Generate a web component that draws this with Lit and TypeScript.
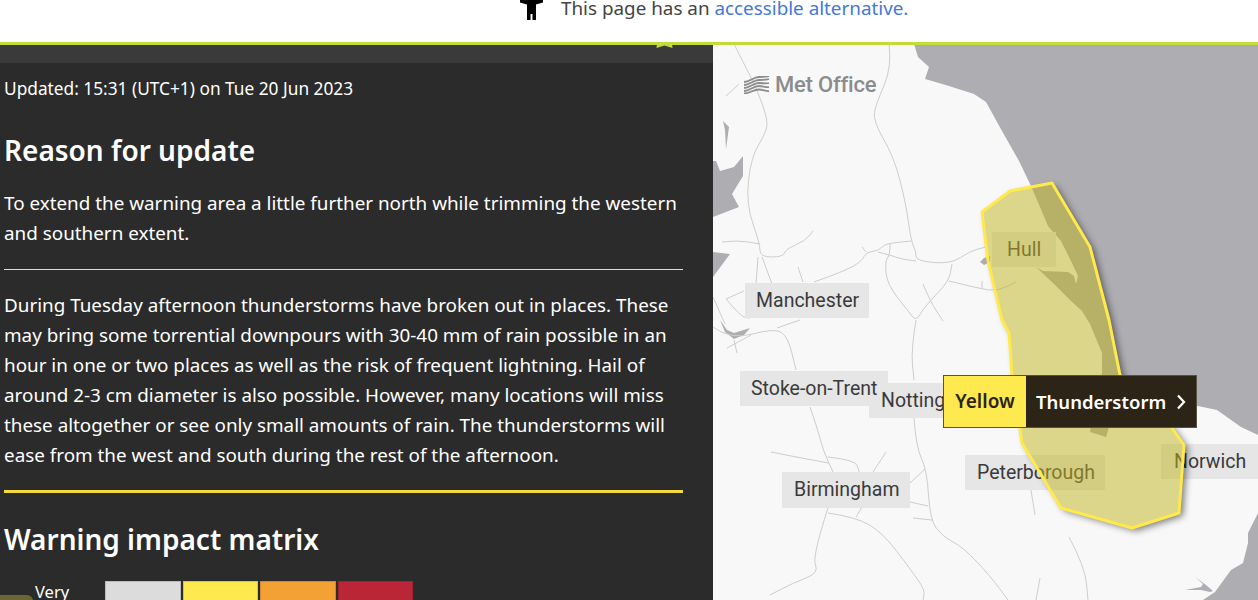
import { LitElement, html, css, svg } from 'lit';
import { customElement } from 'lit/decorators.js';

// map geometry is in page pixels, the svg viewBox starts at the map's own corner
const SEA = [
  '914,44 918,57 929,67 925,79 932,81 949,86 974,94 986,102 1002,131 1019,161 1031,186 1043,214 1048,226 1061,241 1071,261 1078,276 1076,284 1074,276 1068,272 1043,271 1036,267 1054,284 1071,301 1082,311 1090,324 1102,353 1102,373 1095,400 1090,432 1106,437 1109,427 1150,415 1198,406 1217,410 1241,427 1258,435 1258,44',
  '713,161 716,161 720,171 734,167 743,156 743,176 732,194 739,207 713,217',
  '713,252 730,254 713,277',
  '723,121 729,127 726,149 725,130',
  '720,320 727,330 734,333 750,328 744,335 734,339 725,332',
  '1258,513 1248,533 1248,543 1243,563 1231,570 1215,592 1203,600 1258,600',
  '1195,577 1206,585 1213,591 1210,592 1201,590 1185,590 1201,587 1203,584',
  '980,262 984,258 990,256 990,262 984,265',
];

const ROADS = [
  '734,44 744,64 756,87 767,117 767,131 751,157 746,204 760,244 760,257 783,257 786,249 805,241 813,231',
  '889,44 892,67 876,104 873,121 894,157 906,204 911,241 916,251 916,261 951,264 970,251 986,247',
  '722,242 737,240 760,244',
  '758,257 756,284',
  '762,257 772,284',
  '814,282 845,271 862,261 866,252 878,251 885,244 901,242 911,241',
  '862,247 866,252',
  '878,252 890,255 901,259 916,261',
  '890,244 890,255 885,261 887,284 908,311 916,321 922,311 930,301 949,281 952,264',
  '949,281 981,289 998,291 1016,282',
  '923,284 930,301 943,321',
  '798,267 803,282',
  '982,281 982,289',
  '726,299 744,291',
  '726,299 741,317 750,318',
  '713,297 725,324',
  '726,96 739,84',
  '713,327 730,340 775,328 788,337 796,370',
  '777,328 800,320',
  '727,348 751,335',
  '734,340 737,353',
  '916,320 911,350 914,380',
  '810,407 817,427 823,450 833,472',
  '771,452 796,457 829,463',
  '828,457 856,460 859,472',
  '886,452 873,472',
  '910,483 925,469',
  '910,502 928,506',
  '913,518 932,520',
  '914,418 916,447 927,470 930,520 943,537 963,547 991,577 1008,600',
  '1031,490 1035,515',
  '828,508 812,557 819,573 793,583 770,595',
  '828,513 856,517 883,533 911,570 925,590 923,600',
  '856,517 862,507',
  '1069,537 1085,567 1088,600',
  '1040,578 1036,600',
];

const WARNING =
  '1052,183 1010,191 982,212 988,261 1002,320 1009,333 1012,375 1022,443 1061,508 1132,528 1179,513 1184,445 1172,428 1120,375 1109,320 1090,247';

const LABELS = [
  { name: 'Stoke-on-Trent', x: 740, y: 371, w: 148, h: 35, pad: 11 },
  { name: 'Notting', x: 869, y: 383, w: 90, h: 35, pad: 12 },
  { name: 'Manchester', x: 745, y: 283, w: 124, h: 35, pad: 11 },
  { name: 'Birmingham', x: 782, y: 472, w: 128, h: 36, pad: 12 },
  { name: 'Peterborough', x: 965, y: 455, w: 140, h: 35, pad: 12 },
  { name: 'Norwich', x: 1161, y: 444, w: 97, h: 35, pad: 13 },
  { name: 'Hull', x: 992, y: 232, w: 64, h: 35, pad: 15 },
];

// rounds the corners of a traced road
function smooth(points: string) {
  const pts = points.split(' ').map((p) => p.split(',').map(Number));
  let d = `M${pts[0][0]} ${pts[0][1]}`;
  for (let i = 1; i < pts.length - 1; i++) {
    const mx = (pts[i][0] + pts[i + 1][0]) / 2;
    const my = (pts[i][1] + pts[i + 1][1]) / 2;
    d += `Q${pts[i][0]} ${pts[i][1]} ${mx} ${my}`;
  }
  const last = pts[pts.length - 1];
  return `${d}L${last[0]} ${last[1]}`;
}

@customElement('app-root')
export class AppRoot extends LitElement {
  static override styles = css`
    :host {
      display: block;
      height: 600px;
      overflow: hidden;
      font-family: 'Noto Sans', 'Lato', sans-serif;
      background: #fff;
    }

    .banner {
      height: 42px;
      padding-left: 520px;
      overflow: hidden;
      background: #fff;
      border-bottom: 3px solid #c3dc3c;
    }

    .banner-inner {
      display: flex;
      gap: 18px;
      height: 20px;
      align-items: center;
      margin-top: -2px;
      font-size: 18.850px;
      color: #444;
      white-space: nowrap;
    }

    .banner-inner a {
      color: #4478d8;
      text-decoration: none;
    }

    .person {
      width: 23px;
      height: 22px;
      align-self: flex-start;
      margin-top: 2px;
      flex: none;
    }

    .main {
      display: flex;
      height: 555px;
    }

    .panel {
      width: 713px;
      flex: none;
      position: relative;
      overflow: hidden;
      background: #2b2b2b;
      color: #fff;
    }

    .strip {
      height: 18px;
      background: #3a3a3a;
    }

    .star {
      position: absolute;
      left: 650px;
      top: -21px;
      width: 30px;
      height: 24px;
    }

    .content {
      width: 679px;
      padding-left: 4px;
    }

    .updated {
      margin: 15px 0 0;
      font-size: 17.300px;
      line-height: 22px;
    }

    h2 {
      margin: 0;
      font-size: 28px;
      line-height: 36px;
      font-weight: 600;
    }

    .reason-title {
      margin-top: 32px;
    }

    p {
      margin: 0;
      font-size: 18.850px;
      line-height: 30px;
    }

    .reason {
      margin-top: 20px;
    }

    .rule {
      margin: 21px 0 20px;
      border-top: 1px solid #ddd;
    }

    .rule-yellow {
      margin: 20px 0 0;
      border-top: 3px solid #f2da3c;
    }

    .matrix-title {
      margin-top: 28px;
    }

    .matrix {
      margin-top: 24px;
      display: flex;
      align-items: flex-start;
      position: relative;
    }

    .row-label {
      width: 101px;
      padding-left: 31px;
      box-sizing: border-box;
      font-size: 16.500px;
      line-height: 22px;
    }

    .cells {
      display: flex;
      gap: 2px;
    }

    .cell {
      width: 75.500px;
      height: 40px;
      box-sizing: border-box;
      border: 1px solid rgba(0, 0, 0, 0.15);
    }

    .cell.none { background: #dcdcdc; }
    .cell.yellow { background: #fee94f; }
    .cell.amber { background: #f3a134; }
    .cell.red { background: #bb2637; }

    .marker {
      position: absolute;
      left: -4px;
      top: 14px;
      width: 33px;
      height: 10px;
      border-radius: 0 6px 0 0;
      background: #6b6632;
    }

    .map {
      flex: 1;
      position: relative;
      overflow: hidden;
      background: #f8f8f8;
    }

    .layer {
      position: absolute;
      left: 0;
      top: 0;
      width: 545px;
      height: 555px;
    }

    .label-box {
      position: absolute;
      background: #e6e6e6;
    }

    .label-text {
      position: absolute;
      color: #3a3a3a;
      font-family: 'Roboto', sans-serif;
      font-size: 19.500px;
      line-height: 35px;
      white-space: nowrap;
    }

    .logo {
      position: absolute;
      left: 30px;
      top: 28px;
      display: flex;
      align-items: center;
      gap: 5px;
      color: #8c8c8c;
      font-family: 'Roboto', sans-serif;
      font-weight: 500;
      font-size: 22px;
      line-height: 24px;
      letter-spacing: -0.2px;
    }

    .logo svg {
      width: 27px;
      height: 18px;
    }

    .tip {
      position: absolute;
      left: 230px;
      top: 330px;
      height: 53px;
      display: flex;
      box-sizing: border-box;
      border: 1px solid #57533f;
      font-size: 18.500px;
      font-weight: 600;
      line-height: 51px;
      white-space: nowrap;
    }

    .tip-level {
      width: 82px;
      text-align: center;
      font-size: 19px;
      background: #fee94f;
      color: #2b2417;
    }

    .tip-type {
      width: 170px;
      padding-left: 10px;
      box-sizing: border-box;
      display: flex;
      align-items: center;
      gap: 10px;
      background: #2b2417;
      color: #fff;
    }

    .tip-type svg {
      width: 10px;
      height: 16px;
    }
  `;

  override render() {
    return html`
      <div class="banner">
        <div class="banner-inner">
          <svg class="person" viewBox="0 0 23 22" fill="#000">
            <path d="M0 0h23v2.500l-7 2v15.500h-3.500v-6h-2v6H7V4.500L0 2.500z" />
          </svg>
          <span>This page has an <a href="#">accessible alternative.</a></span>
        </div>
      </div>
      <div class="main">
        <section class="panel">
          <div class="strip"></div>
          <svg class="star" viewBox="0 0 30 24" fill="#c3dc3c">
            <path d="M14.500 0l4 8 10 1-7 7 1 8-8-2.500-8 2.500 1-8-7-7 10-1z" />
          </svg>
          <div class="content">
            <div class="updated">Updated: 15:31 (UTC+1) on Tue 20 Jun 2023</div>
            <h2 class="reason-title">Reason for update</h2>
            <p class="reason">
              To extend the warning area a little further north while trimming the western and
              southern extent.
            </p>
            <div class="rule"></div>
            <p>
              During Tuesday afternoon thunderstorms have broken out in places. These may bring
              some torrential downpours with 30-40 mm of rain possible in an hour in one or two
              places as well as the risk of frequent lightning. Hail of around 2-3 cm diameter is
              also possible. However, many locations will miss these altogether or see only small
              amounts of rain. The thunderstorms will ease from the west and south during the rest
              of the afternoon.
            </p>
            <div class="rule-yellow"></div>
            <h2 class="matrix-title">Warning impact matrix</h2>
            <div class="matrix">
              <div class="marker"></div>
              <div class="row-label">Very</div>
              <div class="cells">
                <div class="cell none"></div>
                <div class="cell yellow"></div>
                <div class="cell amber"></div>
                <div class="cell red"></div>
              </div>
            </div>
          </div>
        </section>
        <section class="map">
          <svg class="layer" viewBox="713 45 545 555">
            <g fill="#aeadb2">${SEA.map((p) => svg`<polygon points=${p} />`)}</g>
            <g fill="none" stroke="#cdcdcd" stroke-width="1">
              ${ROADS.map((p) => svg`<path d=${smooth(p)} />`)}
            </g>
          </svg>
          ${LABELS.map(
            (l) => html`<div
              class="label-box"
              style="left:${l.x - 713}px;top:${l.y - 45}px;width:${l.w}px;height:${l.h}px"
            ></div>`
          )}
          ${LABELS.map(
            (l) => html`<div
              class="label-text"
              style="left:${l.x - 713 + l.pad}px;top:${l.y - 45}px"
            >${l.name}</div>`
          )}
          <svg class="layer" viewBox="713 45 545 555">
            <defs>
              <filter id="blur" x="-20%" y="-20%" width="140%" height="140%">
                <feGaussianBlur stdDeviation="3.500" />
              </filter>
              <mask id="outside" maskUnits="userSpaceOnUse" x="713" y="45" width="545" height="555">
                <rect x="713" y="45" width="545" height="555" fill="#fff" />
                <polygon points=${WARNING} fill="#000" />
              </mask>
            </defs>
            <g mask="url(#outside)">
              <polygon
                points=${WARNING}
                transform="translate(4 3)"
                fill="rgba(0,0,0,0.5)"
                filter="url(#blur)"
              />
            </g>
            <polygon
              points=${WARNING}
              fill="rgba(193,181,32,0.51)"
              stroke="#ffe94d"
              stroke-width="3"
              stroke-linejoin="round"
            />
          </svg>
          <div class="logo">
            <svg viewBox="0 0 27 18" fill="none" stroke="#8c8c8c" stroke-width="1.800">
              <path d="M1 6c6 0 9-5 15-5 4 0 7 0 10-1" />
              <path d="M1 9c6 0 9-5 15-5 4 0 7 0 10-1" />
              <path d="M1 12c6 0 9-5 15-5 4 0 7 1 10 0" />
              <path d="M1 15c6 0 9-5 15-5 4 0 7 2 10 1" />
              <path d="M1 17.500c6 0 9-4 15-4 4 0 7 2 10 1.500" />
            </svg>
            <span>Met Office</span>
          </div>
          <div class="tip">
            <div class="tip-level">Yellow</div>
            <div class="tip-type">
              <span>Thunderstorm</span>
              <svg viewBox="0 0 10 16" fill="none" stroke="#fff" stroke-width="2.200">
                <path d="M2 1.500L8 8l-6 6.500" />
              </svg>
            </div>
          </div>
        </section>
      </div>
    `;
  }
}

declare global {
  interface HTMLElementTagNameMap {
    'app-root': AppRoot;
  }
}
